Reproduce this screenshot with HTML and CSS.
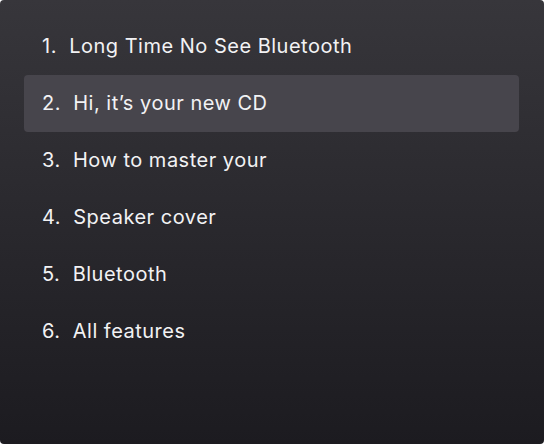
FILE: index.html
```html
<!DOCTYPE html>
<html lang="en">
<head>
  <meta charset="UTF-8" />
  <title>Playlist</title>
  <link rel="stylesheet" href="styles.css">
</head>
<body>
  <!-- Track list -->
  <div class="panel">
    <ul class="tracks">
      <li class="track">1.&nbsp; Long Time No See Bluetooth</li>
      <li class="track active">2.&nbsp; Hi, it’s your new CD</li>
      <li class="track">3.&nbsp; How to master your</li>
      <li class="track">4.&nbsp; Speaker cover</li>
      <li class="track">5.&nbsp; Bluetooth</li>
      <li class="track">6.&nbsp; All features</li>
    </ul>
  </div>
</body>
</html>
```

FILE: styles.css
```css
* {
  box-sizing: border-box;
  margin: 0;
  padding: 0;
}

body {
  background: #fff;
  font-family: 'Inter', sans-serif;
}

.panel {
  width: 544px;
  height: 444px;
  border-radius: 4px;
  background: linear-gradient(180deg, #37363b 0%, #1c1b20 100%);
  padding: 18px 25px 0 24px;
}

.tracks {
  list-style: none;
}

.track {
  height: 57px;
  line-height: 57px;
  padding-left: 18px;
  font-size: 20px;
  letter-spacing: 0.5px;
  color: #f2f2f4;
  border-radius: 4px;
}

.track.active {
  background: #47454c;
}
```
